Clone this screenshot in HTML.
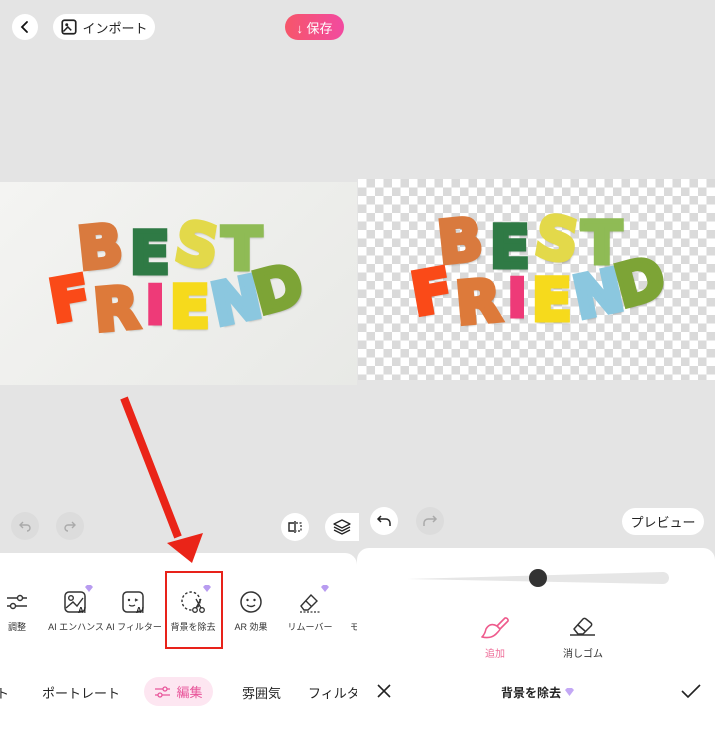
<!DOCTYPE html>
<html><head><meta charset="utf-8"><style>
*{margin:0;padding:0;box-sizing:border-box}
body{width:715px;height:732px;background:#e4e4e4;position:relative;overflow:hidden;font-family:"Liberation Sans","Noto Sans CJK JP",sans-serif;color:#222}
.a{position:absolute}
.circ{position:absolute;border-radius:50%;background:#fff;display:flex;align-items:center;justify-content:center}
.pill{position:absolute;border-radius:16px;background:#fff;display:flex;align-items:center;justify-content:center;font-size:13px}
.lt{position:absolute;font-family:"DejaVu Sans","Liberation Sans",sans-serif;font-weight:bold;font-size:58px;line-height:1;-webkit-text-stroke:5px currentColor;text-shadow:2px 3px 2px rgba(0,0,0,.25)}
.tool{position:absolute;width:60px;text-align:center;font-size:9px;color:#333;white-space:nowrap}
.tool svg{display:block;margin:0 auto 6px}
.tab{position:absolute;font-size:13px;color:#222;top:683px}
</style></head><body>
<div class="circ" style="left:12px;top:14px;width:26px;height:26px"><svg width="14" height="14" viewBox="0 0 14 14"><path d="M9 2 L4 7 L9 12" fill="none" stroke="#111" stroke-width="1.8" stroke-linecap="round"/></svg></div>
<div class="pill" style="left:53px;top:14px;width:102px;height:26px"><svg width="18" height="18" viewBox="0 0 16 16" style="margin-right:4px"><rect x="2" y="2" width="12" height="12" rx="2" fill="none" stroke="#222" stroke-width="1.5"/><path d="M3 12 L7 8 L10 11" fill="none" stroke="#222" stroke-width="1.4"/><circle cx="6" cy="6" r="1.3" fill="#222"/></svg>インポート</div>
<div class="pill" style="left:285px;top:14px;width:59px;height:26px;background:linear-gradient(90deg,#f6566a,#f24aa0);color:#fff">↓ 保存</div>

<div class="a" style="left:0;top:182px;width:357px;height:203px;background:linear-gradient(135deg,#f4f4f2,#e8e9e6)"></div>
<div class="a" style="left:358px;top:179px;width:357px;height:201px;background-color:#fff;background-image:linear-gradient(45deg,#dadada 25%,transparent 25%,transparent 75%,#dadada 75%),linear-gradient(45deg,#dadada 25%,transparent 25%,transparent 75%,#dadada 75%);background-size:17px 17px;background-position:0 0,8.5px 8.5px"></div>

<div class="lt" style="left:78px;top:218px;color:#d97a3e;transform:rotate(-6deg)">B</div>
<div class="lt" style="left:130px;top:224px;color:#2f7a45">E</div>
<div class="lt" style="left:176px;top:216px;color:#e3d94a;transform:rotate(10deg)">S</div>
<div class="lt" style="left:222px;top:220px;color:#8fbb55">T</div>
<div class="lt" style="left:50px;top:270px;color:#fa4a18;transform:rotate(-10deg)">F</div>
<div class="lt" style="left:94px;top:280px;color:#dd7a3a;transform:rotate(-5deg)">R</div>
<div class="lt" style="left:146px;top:280px;color:#ee3a78;font-size:52px;width:16px;overflow:hidden">I</div>
<div class="lt" style="left:170px;top:278px;color:#f6da1c">E</div>
<div class="lt" style="left:212px;top:272px;color:#8bc7df;transform:rotate(-12deg)">N</div>
<div class="lt" style="left:254px;top:260px;color:#7da436;transform:rotate(-15deg)">D</div>

<div class="lt" style="left:438px;top:212px;color:#d97a3e;transform:rotate(-6deg)">B</div>
<div class="lt" style="left:490px;top:218px;color:#2f7a45">E</div>
<div class="lt" style="left:536px;top:210px;color:#e3d94a;transform:rotate(10deg)">S</div>
<div class="lt" style="left:582px;top:214px;color:#8fbb55">T</div>
<div class="lt" style="left:412px;top:263px;color:#fa4a18;transform:rotate(-10deg)">F</div>
<div class="lt" style="left:456px;top:273px;color:#dd7a3a;transform:rotate(-5deg)">R</div>
<div class="lt" style="left:508px;top:273px;color:#ee3a78;font-size:52px;width:16px;overflow:hidden">I</div>
<div class="lt" style="left:532px;top:271px;color:#f6da1c">E</div>
<div class="lt" style="left:574px;top:265px;color:#8bc7df;transform:rotate(-12deg)">N</div>
<div class="lt" style="left:616px;top:253px;color:#7da436;transform:rotate(-15deg)">D</div>

<div class="circ" style="left:11px;top:512px;width:28px;height:28px;background:#dcdcdc"><svg width="14" height="14" viewBox="0 0 14 14"><path d="M5 3 L2 6 L5 9 M2 6 H9 a3 3 0 0 1 0 6" fill="none" stroke="#aaa" stroke-width="1.4"/></svg></div>
<div class="circ" style="left:56px;top:512px;width:28px;height:28px;background:#dcdcdc"><svg width="14" height="14" viewBox="0 0 14 14"><path d="M9 3 L12 6 L9 9 M12 6 H5 a3 3 0 0 0 0 6" fill="none" stroke="#aaa" stroke-width="1.4"/></svg></div>
<div class="circ" style="left:281px;top:513px;width:28px;height:28px"><svg width="16" height="14" viewBox="0 0 16 14"><path d="M8 1 V13 M7 3 H2 V11 H7" fill="none" stroke="#222" stroke-width="1.4"/><path d="M9 3 H14 V11 H9" fill="none" stroke="#222" stroke-width="1.2" stroke-dasharray="2 1.5"/></svg></div>
<div class="circ" style="left:325px;top:513px;width:34px;height:28px;border-radius:14px 0 0 14px"><svg width="18" height="16" viewBox="0 0 18 16"><path d="M9 1 L17 5 L9 9 L1 5 Z M1 8 L9 12 L17 8 M1 11 L9 15 L17 11" fill="none" stroke="#222" stroke-width="1.3" stroke-linejoin="round"/></svg></div>

<div class="a" style="left:0;top:553px;width:357px;height:179px;background:#fff;border-radius:0 12px 0 0"></div>
<div class="tool" style="left:-13px;top:590px"><svg width="24" height="24" viewBox="0 0 24 24"><path d="M2 8 H22 M2 16 H22" stroke="#333" stroke-width="1.4"/><circle cx="15" cy="8" r="2.5" fill="#fff" stroke="#333" stroke-width="1.4"/><circle cx="8" cy="16" r="2.5" fill="#fff" stroke="#333" stroke-width="1.4"/></svg>調整</div>
<div class="tool" style="left:46px;top:590px"><svg width="26" height="24" viewBox="0 0 26 24"><rect x="2" y="2" width="20" height="20" rx="4" fill="none" stroke="#333" stroke-width="1.5"/><circle cx="8" cy="8" r="2.3" fill="none" stroke="#333" stroke-width="1.4"/><path d="M3 18 L10 12 L14 16 L20 8" fill="none" stroke="#333" stroke-width="1.4"/><text x="15" y="23" font-size="8" font-weight="bold" fill="#222" font-family="Liberation Sans">AI</text></svg>AI エンハンス</div>
<div class="tool" style="left:104px;top:590px"><svg width="26" height="24" viewBox="0 0 26 24"><rect x="2" y="2" width="20" height="20" rx="4" fill="none" stroke="#333" stroke-width="1.5"/><circle cx="8" cy="10" r="1.2" fill="#333"/><path d="M14 9 L16 10 L14 11 M8 15 Q11 17 14 15" fill="none" stroke="#333" stroke-width="1.3"/><text x="15" y="23" font-size="8" font-weight="bold" fill="#222" font-family="Liberation Sans">AI</text></svg>AI フィルター</div>
<div class="tool" style="left:163px;top:590px"><svg width="26" height="24" viewBox="0 0 26 24"><circle cx="11" cy="11" r="9" fill="none" stroke="#333" stroke-width="1.4" stroke-dasharray="2.5 2"/><circle cx="15" cy="20" r="2.3" fill="#fff" stroke="#333" stroke-width="1.3"/><circle cx="22" cy="20" r="2.3" fill="#fff" stroke="#333" stroke-width="1.3"/><path d="M16 18 L21 9 M21 18 L16 9" stroke="#333" stroke-width="1.3"/></svg>背景を除去</div>
<div class="tool" style="left:221px;top:590px"><svg width="24" height="24" viewBox="0 0 24 24"><circle cx="12" cy="12" r="10" fill="none" stroke="#333" stroke-width="1.5"/><circle cx="8.5" cy="10" r="1.2" fill="#333"/><circle cx="15.5" cy="10" r="1.2" fill="#333"/><path d="M8 15 Q12 18 16 15" fill="none" stroke="#333" stroke-width="1.4"/></svg>AR 効果</div>
<div class="tool" style="left:280px;top:590px"><svg width="26" height="24" viewBox="0 0 26 24"><path d="M4 16 L14 5 L20 11 L11 20 L7 20 Z M9 11 L15 17" fill="none" stroke="#333" stroke-width="1.4"/><path d="M3 22 H23" stroke="#333" stroke-width="1.2" stroke-dasharray="2 1.5"/></svg>リムーバー</div>
<div class="tool" style="left:350px;top:620px;text-align:left">モ</div>
<svg class="a" style="left:84px;top:584px" width="10" height="9"><path d="M1 3 L3 1 H7 L9 3 L5 8 Z" fill="#b89cf0"/></svg>
<svg class="a" style="left:202px;top:584px" width="10" height="9"><path d="M1 3 L3 1 H7 L9 3 L5 8 Z" fill="#b89cf0"/></svg>
<svg class="a" style="left:320px;top:584px" width="10" height="9"><path d="M1 3 L3 1 H7 L9 3 L5 8 Z" fill="#b89cf0"/></svg>
<div class="a" style="left:165px;top:571px;width:58px;height:78px;border:2px solid #e8221a"></div>
<div class="tab" style="left:-4px">ト</div>
<div class="tab" style="left:42px">ポートレート</div>
<div class="a" style="left:144px;top:677px;width:69px;height:29px;border-radius:15px;background:#fde6f1;color:#e8559a;font-size:13px;display:flex;align-items:center;justify-content:center"><svg width="17" height="12" viewBox="0 0 17 12" style="margin-right:5px"><path d="M1 3 H16 M1 9 H16" stroke="#e8559a" stroke-width="1.3"/><circle cx="11" cy="3" r="2" fill="#fde6f1" stroke="#e8559a" stroke-width="1.3"/><circle cx="6" cy="9" r="2" fill="#fde6f1" stroke="#e8559a" stroke-width="1.3"/></svg>編集</div>
<div class="tab" style="left:242px">雰囲気</div>
<div class="tab" style="left:308px">フィルタ</div>

<svg class="a" style="left:0;top:0" width="357" height="732"><line x1="124" y1="398" x2="178" y2="537" stroke="#ea2418" stroke-width="8"/><polygon points="167,543 203,533 192,563" fill="#ea2418"/></svg>

<div class="circ" style="left:370px;top:507px;width:28px;height:28px"><svg width="16" height="14" viewBox="0 0 16 14"><path d="M5 2 L2 5 L5 8 M2 5 H10 a4 4 0 0 1 4 4 V12" fill="none" stroke="#222" stroke-width="1.5"/></svg></div>
<div class="circ" style="left:416px;top:507px;width:28px;height:28px;background:#dcdcdc"><svg width="16" height="14" viewBox="0 0 16 14"><path d="M11 2 L14 5 L11 8 M14 5 H6 a4 4 0 0 0 -4 4 V12" fill="none" stroke="#aaa" stroke-width="1.5"/></svg></div>
<div class="pill" style="left:622px;top:508px;width:82px;height:27px;font-size:13px">プレビュー</div>
<div class="a" style="left:357px;top:548px;width:358px;height:184px;background:#fff;border-radius:12px 12px 0 0"></div>
<svg class="a" style="left:400px;top:565px" width="275" height="26"><path d="M7 14 L263 7 a5 5 0 0 1 0 12 Z" fill="#e6e6e6"/><circle cx="138" cy="13" r="9" fill="#333"/></svg>
<svg class="a" style="left:481px;top:614px" width="28" height="26" viewBox="0 0 28 26"><path d="M16 12 L24 4 a2.5 2.5 0 0 1 3 3 L19 15 M16 12 Q9 8 5 15 Q4 20 1 23 Q10 25 15 20 Q19 16 19 15 Z" fill="none" stroke="#ee5a8c" stroke-width="1.6" stroke-linejoin="round"/></svg>
<div class="a" style="left:485px;top:645px;font-size:10px;color:#ee6d98">追加</div>
<svg class="a" style="left:569px;top:614px" width="28" height="24" viewBox="0 0 28 24"><path d="M5 15 L14 5 a2 2 0 0 1 3 0 L22 9 a2 2 0 0 1 0 3 L14 20 H9 Z M9 11 L16 17" fill="none" stroke="#333" stroke-width="1.5" stroke-linejoin="round"/><path d="M1 21 H26" stroke="#333" stroke-width="1.5"/></svg>
<div class="a" style="left:563px;top:645px;font-size:10px;color:#333">消しゴム</div>
<svg class="a" style="left:376px;top:683px" width="16" height="16"><path d="M2 2 L14 14 M14 2 L2 14" stroke="#222" stroke-width="1.6"/></svg>
<div class="a" style="left:501px;top:684px;font-size:12px;font-weight:bold;color:#222">背景を除去</div>
<svg class="a" style="left:564px;top:687px" width="11" height="10"><path d="M1 3 L3 1 H8 L10 3 L5.5 9 Z" fill="#c3a8f5"/></svg>
<svg class="a" style="left:680px;top:683px" width="22" height="16"><path d="M2 8 L8 14 L20 2" fill="none" stroke="#222" stroke-width="1.6"/></svg>
</body></html>
